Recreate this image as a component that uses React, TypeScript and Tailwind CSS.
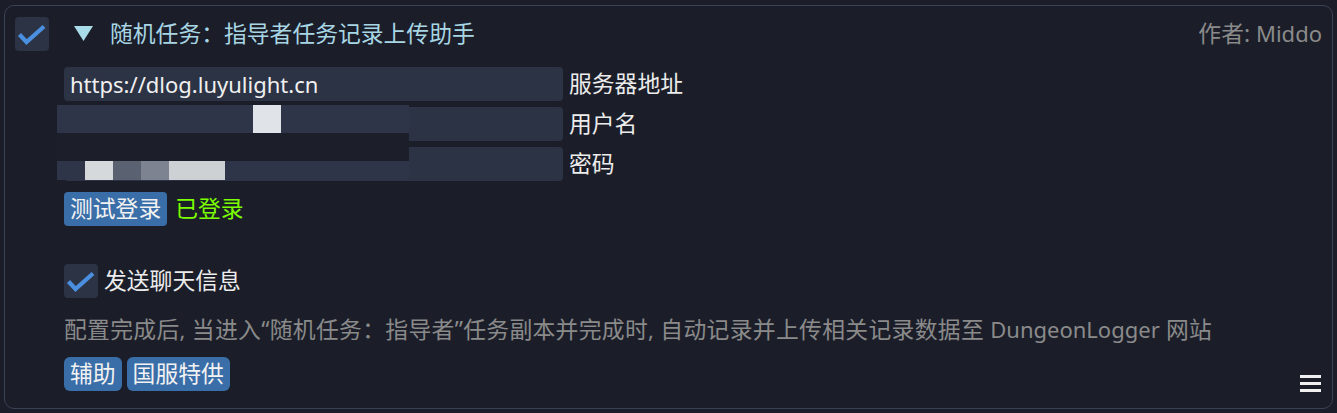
import React from "react";

const font = { fontFamily: '"Noto Sans", "Noto Sans CJK SC", sans-serif' };

function Check({ className = "" }: { className?: string }) {
  return (
    <div className={"w-[34px] h-[34px] rounded-[4px] bg-[#2c3345] flex items-center justify-center shrink-0 " + className}>
      <svg width="34" height="34" viewBox="0 0 34 34">
        <path d="M4.5 17.5 L11.5 25 L29 9.5" fill="none" stroke="#4a8fe0" strokeWidth="4.2" strokeLinecap="butt" strokeLinejoin="miter" />
      </svg>
    </div>
  );
}

export default function App() {
  return (
    <div className="min-h-screen bg-[#1b1e29] pl-[4px] pr-[4px] pt-[5px]" style={font}>
      <div className="relative h-[404px] rounded-[10px] border border-[#3a4256] bg-[#1b1e29]">
        {/* header */}
        <div className="flex items-center pl-[10px] pr-[10px] pt-[10px]">
          <Check />
          <svg width="19" height="15" viewBox="0 0 19 15" className="ml-[25px]">
            <polygon points="0,0 19,0 9.5,15" fill="#a8dce8" />
          </svg>
          <span className="ml-[17px] text-[22.8px] leading-[34px] text-[#a8d6e4]">随机任务：指导者任务记录上传助手</span>
          <span className="ml-auto text-[22.8px] leading-[34px] text-[#8a8a8a]">作者: <span className="text-[22px]">Middo</span></span>
        </div>

        <div className="pl-[59px] pr-[10px]">
          <div className="relative mt-[16px] flex flex-col gap-[6px]">
            <div className="flex items-center gap-[6px]">
              <div className="w-[499px] h-[34px] rounded-[4px] bg-[#2c3345] px-[6px] text-[22px] leading-[34px] text-[#f0f0f0]">https://dlog.luyulight.cn</div>
              <span className="text-[22.8px] leading-[34px] text-[#ececec]">服务器地址</span>
            </div>
            <div className="flex items-center gap-[6px]">
              <div className="w-[499px] h-[34px] rounded-[4px] bg-[#2c3345]" />
              <span className="text-[22.8px] leading-[34px] text-[#ececec]">用户名</span>
            </div>
            <div className="flex items-center gap-[6px]">
              <div className="w-[499px] h-[34px] rounded-[4px] bg-[#2c3345]" />
              <span className="text-[22.8px] leading-[34px] text-[#ececec]">密码</span>
            </div>
            {/* mosaic redaction overlay */}
            <div className="absolute left-[-7px] top-[38px] w-[352px] flex flex-col">
              <div className="flex h-[28px]">
                <div className="w-[196px] bg-[#2e3548]" />
                <div className="w-[28px] bg-[#e0e3e8]" />
                <div className="flex-1 bg-[#2e3548]" />
              </div>
              <div className="h-[28px] bg-[#1c1f2a]" />
              <div className="flex h-[19px]">
                <div className="w-[28px] bg-[#2e3548]" />
                <div className="w-[28px] bg-[#d5d9dc]" />
                <div className="w-[28px] bg-[#5a6170]" />
                <div className="w-[28px] bg-[#7d8390]" />
                <div className="w-[56px] bg-[#cdd1d4]" />
                <div className="flex-1 bg-[#2e3548]" />
              </div>
            </div>
          </div>

          <div className="mt-[11px] flex items-center gap-[8px]">
            <div className="h-[34px] rounded-[4px] bg-[#3a6ea8] px-[6px] text-[22.8px] leading-[34px] text-[#f2f2f2]">测试登录</div>
            <span className="text-[22.8px] leading-[34px] text-[#7cfc00]">已登录</span>
          </div>

          <div className="mt-[38px] flex items-center gap-[6px]">
            <Check />
            <span className="text-[22.8px] leading-[34px] text-[#ececec]">发送聊天信息</span>
          </div>

          <div className="mt-[14px] text-[22.8px] leading-[34px] tracking-[0.32px] text-[#8a8a8a]">
            配置完成后<span className="text-[22px]">, </span>当进入“随机任务：指导者”任务副本并完成时<span className="text-[22px]">, </span>自动记录并上传相关记录数据至 <span className="text-[22px] tracking-normal">DungeonLogger</span> 网站
          </div>

          <div className="mt-[10px] flex items-end justify-between">
            <div className="flex gap-[5px]">
              <div className="h-[34px] rounded-[6px] bg-[#3a6ea8] px-[6px] text-[22.8px] leading-[34px] text-[#f2f2f2]">辅助</div>
              <div className="h-[34px] rounded-[6px] bg-[#3a6ea8] px-[6px] text-[22.8px] leading-[34px] text-[#f2f2f2]">国服特供</div>
            </div>
            <svg width="22" height="20" viewBox="0 0 22 20" className="mb-[-3px]">
              <rect x="0" y="1" width="21" height="3" fill="#f0f0f0" />
              <rect x="0" y="8" width="21" height="3" fill="#f0f0f0" />
              <rect x="0" y="15" width="21" height="3" fill="#f0f0f0" />
            </svg>
          </div>
        </div>
      </div>
    </div>
  );
}
